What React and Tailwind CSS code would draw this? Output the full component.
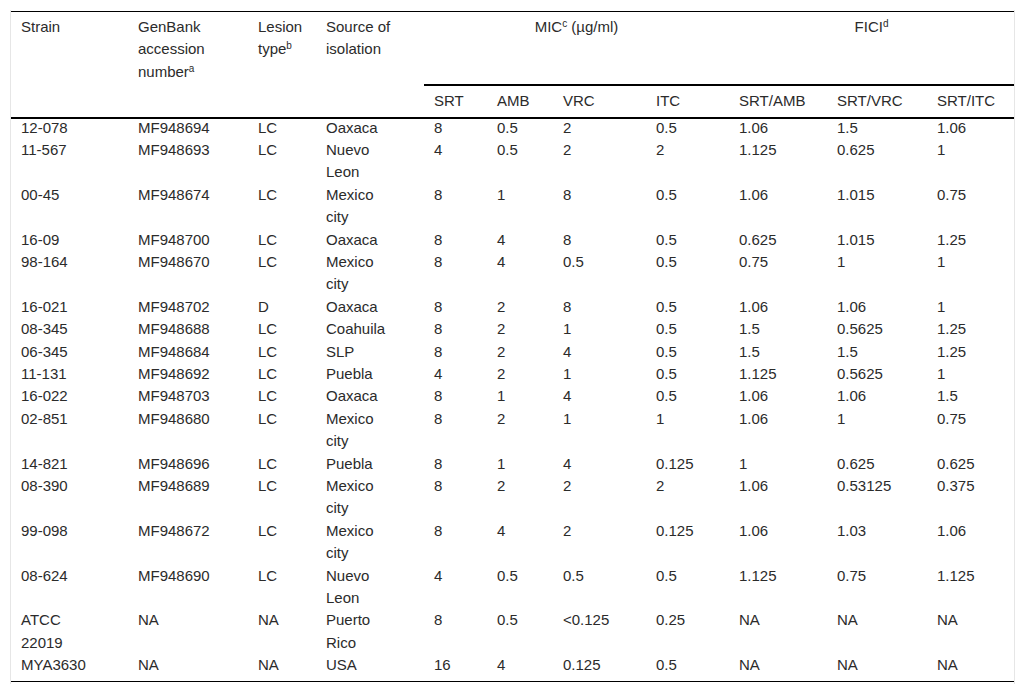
const rows = [
  ['12-078', 'MF948694', 'LC', 'Oaxaca', '8', '0.5', '2', '0.5', '1.06', '1.5', '1.06'],
  ['11-567', 'MF948693', 'LC', 'Nuevo Leon', '4', '0.5', '2', '2', '1.125', '0.625', '1'],
  ['00-45', 'MF948674', 'LC', 'Mexico city', '8', '1', '8', '0.5', '1.06', '1.015', '0.75'],
  ['16-09', 'MF948700', 'LC', 'Oaxaca', '8', '4', '8', '0.5', '0.625', '1.015', '1.25'],
  ['98-164', 'MF948670', 'LC', 'Mexico city', '8', '4', '0.5', '0.5', '0.75', '1', '1'],
  ['16-021', 'MF948702', 'D', 'Oaxaca', '8', '2', '8', '0.5', '1.06', '1.06', '1'],
  ['08-345', 'MF948688', 'LC', 'Coahuila', '8', '2', '1', '0.5', '1.5', '0.5625', '1.25'],
  ['06-345', 'MF948684', 'LC', 'SLP', '8', '2', '4', '0.5', '1.5', '1.5', '1.25'],
  ['11-131', 'MF948692', 'LC', 'Puebla', '4', '2', '1', '0.5', '1.125', '0.5625', '1'],
  ['16-022', 'MF948703', 'LC', 'Oaxaca', '8', '1', '4', '0.5', '1.06', '1.06', '1.5'],
  ['02-851', 'MF948680', 'LC', 'Mexico city', '8', '2', '1', '1', '1.06', '1', '0.75'],
  ['14-821', 'MF948696', 'LC', 'Puebla', '8', '1', '4', '0.125', '1', '0.625', '0.625'],
  ['08-390', 'MF948689', 'LC', 'Mexico city', '8', '2', '2', '2', '1.06', '0.53125', '0.375'],
  ['99-098', 'MF948672', 'LC', 'Mexico city', '8', '4', '2', '0.125', '1.06', '1.03', '1.06'],
  ['08-624', 'MF948690', 'LC', 'Nuevo Leon', '4', '0.5', '0.5', '0.5', '1.125', '0.75', '1.125'],
  ['ATCC 22019', 'NA', 'NA', 'Puerto Rico', '8', '0.5', '<0.125', '0.25', 'NA', 'NA', 'NA'],
  ['MYA3630', 'NA', 'NA', 'USA', '16', '4', '0.125', '0.5', 'NA', 'NA', 'NA'],
];

// inner text widths keep the same wrapping as the source table
const textW = ['w-[78px]', 'w-[95px]', 'w-[55px]', 'w-[68px]', '', '', '', '', '', '', ''];

export default function App() {
  return (
    <div className="min-h-screen bg-white pt-[10px] pl-[10px] font-['Liberation_Sans',Arial,sans-serif] text-[15px] leading-[22.4px] text-[#2b2b2b]">
      <div className="w-[1005px] border-x border-[#e6e6e6] pt-[1px] pb-[2px]">
        <table className="w-[1003px] table-fixed border-collapse">
          <colgroup>
            <col className="w-[117px]" />
            <col className="w-[120px]" />
            <col className="w-[68px]" />
            <col className="w-[108px]" />
            <col className="w-[63px]" />
            <col className="w-[66px]" />
            <col className="w-[93px]" />
            <col className="w-[83px]" />
            <col className="w-[98px]" />
            <col className="w-[100px]" />
            <col className="w-[87px]" />
          </colgroup>
          <thead>
            <tr className="h-[73px] border-t border-black">
              <th rowSpan={2} className="px-[10px] pt-[4px] text-left align-top font-normal">Strain</th>
              <th rowSpan={2} className="px-[10px] pt-[4px] text-left align-top font-normal">
                <div className="w-[95px]">
                  GenBank accession number<sup className="text-[10px]">a</sup>
                </div>
              </th>
              <th rowSpan={2} className="px-[10px] pt-[4px] text-left align-top font-normal">
                <div className="w-[55px]">
                  Lesion type<sup className="text-[10px]">b</sup>
                </div>
              </th>
              <th rowSpan={2} className="px-[10px] pt-[4px] text-left align-top font-normal">
                <div className="w-[68px]">Source of isolation</div>
              </th>
              <th colSpan={4} className="px-[10px] pt-[4px] text-center align-top font-normal">
                MIC<sup className="text-[10px]">c</sup> (µg/ml)
              </th>
              <th colSpan={3} className="px-[10px] pt-[4px] text-center align-top font-normal">
                FICI<sup className="text-[10px]">d</sup>
              </th>
            </tr>
            <tr className="h-[33px] border-b-2 border-black">
              {['SRT', 'AMB', 'VRC', 'ITC', 'SRT/AMB', 'SRT/VRC', 'SRT/ITC'].map((h) => (
                <th key={h} className="border-t-2 border-black px-[10px] text-left align-middle font-normal">
                  {h}
                </th>
              ))}
            </tr>
          </thead>
          <tbody className="border-b border-black">
            {rows.map((r, i) => (
              <tr key={r[0]}>
                {r.map((c, j) => (
                  <td
                    key={j}
                    className={`px-[10px] align-top ${i === rows.length - 1 ? 'pb-[4px]' : ''}`}
                  >
                    <div className={`${textW[j]} ${i === 0 ? '-mt-[2px]' : ''}`}>{c}</div>
                  </td>
                ))}
              </tr>
            ))}
          </tbody>
        </table>
      </div>
    </div>
  );
}
